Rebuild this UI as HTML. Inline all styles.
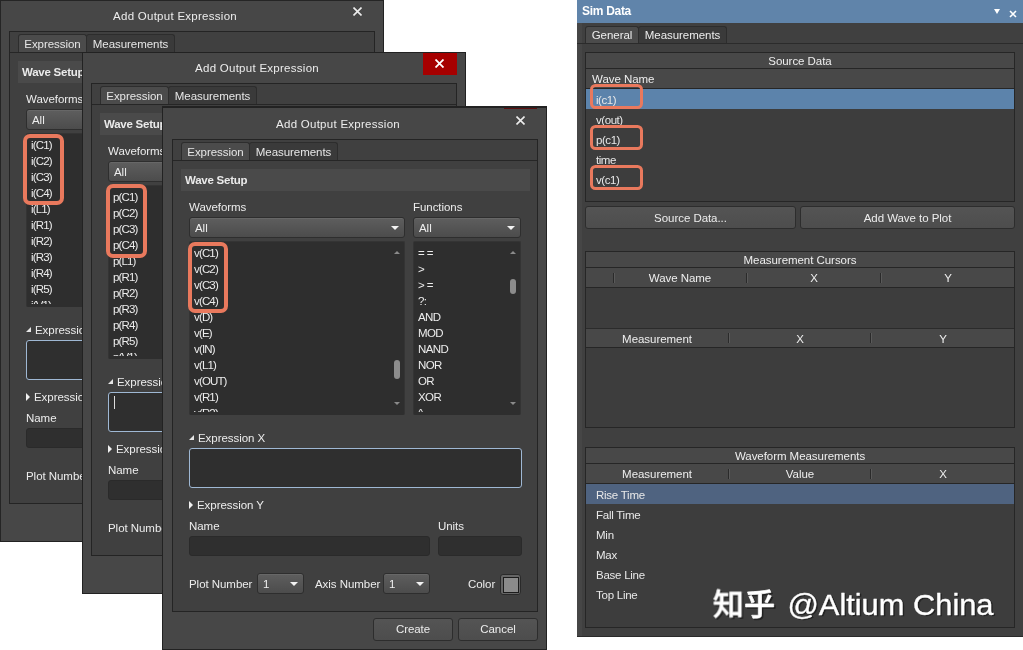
<!DOCTYPE html>
<html><head><meta charset="utf-8"><title>Add Output Expression</title><style>
*{box-sizing:border-box;margin:0;padding:0}
html,body{width:1023px;height:650px;overflow:hidden;background:#fff}
body{position:relative;font-family:"Liberation Sans",sans-serif;font-size:11.5px;color:#ececec;letter-spacing:-0.05px}
.a{position:absolute}
.dlg{will-change:transform;position:absolute;width:385px;height:542px;background:#474747;border:1px solid #222;overflow:hidden}
.dlg .title{position:absolute;left:75px;width:200px;top:7px;height:18px;line-height:18px;text-align:center;font-size:11.5px;color:#ececec;letter-spacing:0.27px}
.dlg .x{position:absolute;left:353px;top:7px;width:9px;height:9px}
.dlg .xr{position:absolute;left:341px;top:0px;width:34px;height:23px;background:#a60000}
.page{position:absolute;left:9px;top:31px;width:366px;height:473px;background:#404040;border:1px solid #242424}
.tabline{position:absolute;left:10px;top:52px;width:364px;height:1px;background:#262626}
.tab{position:absolute;top:34px;height:19px;line-height:19px;text-align:center;border:1px solid #2d2d2d;border-bottom:none;border-radius:3px 3px 0 0;color:#e6e6e6}
.tab.on{background:#4b4b4b;left:18px;width:69px}
.tab.off{background:#3a3a3a;left:86px;width:89px}
.band{position:absolute;left:18px;top:61px;width:349px;height:22px;background:#4a4a4a;line-height:23px;padding-left:4px;font-weight:bold;color:#eaeaea;letter-spacing:-0.25px}
.lbl{position:absolute;height:16px;line-height:16px;white-space:nowrap;color:#ececec}
.combo{position:absolute;height:21px;border:1px solid #2e2e2e;border-radius:3px;background:linear-gradient(#5e5e5e,#4c4c4c);box-shadow:inset 0 1px 0 #676767;line-height:20px;padding-left:5px;color:#eee}
.combo i{position:absolute;right:5px;top:8px;width:0;height:0;border-left:4px solid transparent;border-right:4px solid transparent;border-top:4px solid #f2f2f2}
.list{position:absolute;background:#2e2e2e;border:1px solid #343434;border-radius:2px;overflow:hidden;padding-top:3px;border-bottom:3px solid #2e2e2e}
.list div{height:16px;line-height:16px;padding-left:4px;white-space:nowrap;color:#ececec;letter-spacing:-0.85px}
.list .up{position:absolute;right:4px;top:9px;width:0;height:0;padding:0;border-left:3.5px solid transparent;border-right:3.5px solid transparent;border-bottom:3px solid #8a8a8a}
.list .dn{position:absolute;right:4px;bottom:7px;width:0;height:0;padding:0;border-left:3.5px solid transparent;border-right:3.5px solid transparent;border-top:3px solid #8a8a8a}
.list .th{position:absolute;right:4px;width:6px;padding:0;border-radius:3px;background:#8c8c8c}
.hl{position:absolute;border:4px solid #e9795d;border-radius:7px}
.inp{position:absolute;background:#2f2f2f;border:1px solid #2a2a2a;border-radius:3px}
.inp.f{border-color:#9fb8d4;background:#2f2f2f}
.btn{position:absolute;height:23px;border:1px solid #2d2d2d;border-radius:3px;background:linear-gradient(#545454,#4d4d4d);text-align:center;line-height:21px;color:#ececec}
.tri1{position:absolute;width:0;height:0;border-left:5px solid transparent;border-bottom:5px solid #e6e6e6}
.tri2{position:absolute;width:0;height:0;border-top:4px solid transparent;border-bottom:4px solid transparent;border-left:4.5px solid #f0f0f0}
.sw{position:absolute;width:21px;height:21px;border:1px solid #2a2a2a;border-radius:3px;background:#666;padding:1.5px}
.sw b{display:block;width:100%;height:100%;background:#8b8b8b;border:1px solid #1c1c1c}
/* sim panel */
.sim{will-change:transform;position:absolute;left:577px;top:0;width:446px;height:637px;background:#404040;border-bottom:1px solid #2a2a2a}
.sim .hd{position:absolute;left:0;top:0;width:446px;height:23px;background:#6084aa;color:#fff;font-weight:bold;line-height:22px;padding-left:5px;font-size:12px;letter-spacing:-0.3px}
.stab{position:absolute;top:26px;height:18px;line-height:17px;text-align:center;border:1px solid #2d2d2d;border-bottom:none;border-radius:3px 3px 0 0}
.grid{position:absolute;background:#3d3d3d;border:1px solid #262626}
.gh{position:absolute;left:0;height:16px;line-height:17px;background:#484848;border-bottom:1px solid #262626;text-align:center;color:#eee;white-space:nowrap}
.gh span{position:absolute;top:0;height:19px;text-align:center}
.sep{position:absolute;width:1px;height:10px;top:3px;background:#2a2a2a;box-shadow:1px 0 0 #5a5a5a}
.row{position:absolute;left:0;height:20px;line-height:20px;letter-spacing:-0.25px;padding-left:10px;color:#e8e8e8;white-space:nowrap}
</style></head><body>
<div class="dlg" style="left:-1px;top:-1px;z-index:1;height:543px;width:385px"><div class="a" style="left:0;top:0;width:1px;height:541px;background:#252525"></div><div class="a" style="left:0;top:0;width:383px;height:1px;background:#252525"></div><div class="a" style="left:0px;top:0px;width:383px;height:540px">
<div class="title">Add Output Expression</div><div class="x" style="margin-top:-1px"><svg width="9" height="9" viewBox="0 0 9 9"><path d="M0.5 0.5L8.5 8.5M8.5 0.5L0.5 8.5" stroke="#ececec" stroke-width="1.6" fill="none"/></svg></div>
<div class="page"></div>
<div class="tab off">Measurements</div><div class="tab on">Expression</div><div class="tabline"></div>
<div class="band">Wave Setup</div>
<div class="lbl" style="left:26px;top:91px">Waveforms</div>
<div class="lbl" style="left:250px;top:91px">Functions</div>
<div class="combo" style="left:26px;top:109px;width:216px">All<i></i></div>
<div class="combo" style="left:250px;top:109px;width:108px">All<i></i></div>
<div class="list" style="left:26px;top:133px;width:216px;height:174px"><div>i(C1)</div><div>i(C2)</div><div>i(C3)</div><div>i(C4)</div><div>i(L1)</div><div>i(R1)</div><div>i(R2)</div><div>i(R3)</div><div>i(R4)</div><div>i(R5)</div><div>i(V1)</div><div class="up"></div><div class="th" style="top:118px;height:19px"></div><div class="dn"></div></div>
<div class="list" style="left:250px;top:133px;width:108px;height:174px"><div style="letter-spacing:-0.6px">= =</div><div style="letter-spacing:-0.6px">&gt;</div><div style="letter-spacing:-0.6px">&gt; =</div><div style="letter-spacing:-0.6px">?:</div><div style="letter-spacing:-0.6px">AND</div><div style="letter-spacing:-0.6px">MOD</div><div style="letter-spacing:-0.6px">NAND</div><div style="letter-spacing:-0.6px">NOR</div><div style="letter-spacing:-0.6px">OR</div><div style="letter-spacing:-0.6px">XOR</div><div style="letter-spacing:-0.6px">^</div><div class="up"></div><div class="th" style="top:37px;height:15px"></div><div class="dn"></div></div>
<div class="hl" style="left:23px;top:134px;width:41px;height:71px"></div>
<div class="tri1" style="left:26px;top:327px"></div><div class="lbl" style="left:35px;top:322px">Expression X</div>
<div class="inp f" style="left:26px;top:340px;width:333px;height:40px"></div>
<div class="tri2" style="left:26px;top:393px"></div><div class="lbl" style="left:34px;top:389px">Expression Y</div>
<div class="lbl" style="left:26px;top:410px">Name</div><div class="lbl" style="left:275px;top:410px">Units</div>
<div class="inp" style="left:26px;top:428px;width:241px;height:20px"></div>
<div class="inp" style="left:275px;top:428px;width:83.5px;height:20px"></div>
<div class="lbl" style="left:26px;top:468px">Plot Number</div>
<div class="combo" style="left:94px;top:465px;width:47px">1<i></i></div>
<div class="lbl" style="left:152px;top:468px">Axis Number</div>
<div class="combo" style="left:220px;top:465px;width:47px">1<i></i></div>
<div class="lbl" style="left:305px;top:468px">Color</div>
<div class="sw" style="left:337px;top:466px"><b></b></div>
<div class="btn" style="left:210px;top:510px;width:80px">Create</div>
<div class="btn" style="left:295px;top:510px;width:80px">Cancel</div>
</div></div>
<div class="dlg" style="left:82px;top:52px;z-index:2;height:542px;width:384px"><div class="a" style="left:-1px;top:-1px;width:383px;height:540px">
<div class="title">Add Output Expression</div><div class="xr"></div><div class="x" style="margin-top:-1px"><svg width="9" height="9" viewBox="0 0 9 9"><path d="M0.5 0.5L8.5 8.5M8.5 0.5L0.5 8.5" stroke="#fff" stroke-width="1.8" fill="none"/></svg></div>
<div class="page"></div>
<div class="tab off">Measurements</div><div class="tab on">Expression</div><div class="tabline"></div>
<div class="band">Wave Setup</div>
<div class="lbl" style="left:26px;top:91px">Waveforms</div>
<div class="lbl" style="left:250px;top:91px">Functions</div>
<div class="combo" style="left:26px;top:109px;width:216px">All<i></i></div>
<div class="combo" style="left:250px;top:109px;width:108px">All<i></i></div>
<div class="list" style="left:26px;top:133px;width:216px;height:174px"><div>p(C1)</div><div>p(C2)</div><div>p(C3)</div><div>p(C4)</div><div>p(L1)</div><div>p(R1)</div><div>p(R2)</div><div>p(R3)</div><div>p(R4)</div><div>p(R5)</div><div>p(V1)</div><div class="up"></div><div class="th" style="top:118px;height:19px"></div><div class="dn"></div></div>
<div class="list" style="left:250px;top:133px;width:108px;height:174px"><div style="letter-spacing:-0.6px">= =</div><div style="letter-spacing:-0.6px">&gt;</div><div style="letter-spacing:-0.6px">&gt; =</div><div style="letter-spacing:-0.6px">?:</div><div style="letter-spacing:-0.6px">AND</div><div style="letter-spacing:-0.6px">MOD</div><div style="letter-spacing:-0.6px">NAND</div><div style="letter-spacing:-0.6px">NOR</div><div style="letter-spacing:-0.6px">OR</div><div style="letter-spacing:-0.6px">XOR</div><div style="letter-spacing:-0.6px">^</div><div class="up"></div><div class="th" style="top:37px;height:15px"></div><div class="dn"></div></div>
<div class="hl" style="left:23.5px;top:131.5px;width:41.5px;height:74.5px"></div>
<div class="tri1" style="left:26px;top:327px"></div><div class="lbl" style="left:35px;top:322px">Expression X</div>
<div class="inp f" style="left:26px;top:340px;width:333px;height:40px"></div><div class="a" style="left:32px;top:344px;width:1px;height:13px;background:#ddd"></div>
<div class="tri2" style="left:26px;top:393px"></div><div class="lbl" style="left:34px;top:389px">Expression Y</div>
<div class="lbl" style="left:26px;top:410px">Name</div><div class="lbl" style="left:275px;top:410px">Units</div>
<div class="inp" style="left:26px;top:428px;width:241px;height:20px"></div>
<div class="inp" style="left:275px;top:428px;width:83.5px;height:20px"></div>
<div class="lbl" style="left:26px;top:468px">Plot Number</div>
<div class="combo" style="left:94px;top:465px;width:47px">1<i></i></div>
<div class="lbl" style="left:152px;top:468px">Axis Number</div>
<div class="combo" style="left:220px;top:465px;width:47px">1<i></i></div>
<div class="lbl" style="left:305px;top:468px">Color</div>
<div class="sw" style="left:337px;top:466px"><b></b></div>
<div class="btn" style="left:210px;top:510px;width:80px">Create</div>
<div class="btn" style="left:295px;top:510px;width:80px">Cancel</div>
</div></div>
<div class="a" style="left:162px;top:106px;width:385px;height:2px;background:#222;z-index:3"></div>
<div class="dlg" style="left:162px;top:107px;z-index:3;height:543px;width:385px"><div class="a" style="left:341px;top:0;width:33px;height:1px;background:#5c1010"></div><div class="a" style="left:0px;top:0px;width:383px;height:540px">
<div class="title">Add Output Expression</div><div class="x" style="margin-top:0px"><svg width="9" height="9" viewBox="0 0 9 9"><path d="M0.5 0.5L8.5 8.5M8.5 0.5L0.5 8.5" stroke="#ececec" stroke-width="1.6" fill="none"/></svg></div>
<div class="page"></div>
<div class="tab off">Measurements</div><div class="tab on">Expression</div><div class="tabline"></div>
<div class="band">Wave Setup</div>
<div class="lbl" style="left:26px;top:91px">Waveforms</div>
<div class="lbl" style="left:250px;top:91px">Functions</div>
<div class="combo" style="left:26px;top:109px;width:216px">All<i></i></div>
<div class="combo" style="left:250px;top:109px;width:108px">All<i></i></div>
<div class="list" style="left:26px;top:133px;width:216px;height:174px"><div>v(C1)</div><div>v(C2)</div><div>v(C3)</div><div>v(C4)</div><div>v(D)</div><div>v(E)</div><div>v(IN)</div><div>v(L1)</div><div>v(OUT)</div><div>v(R1)</div><div>v(R2)</div><div class="up"></div><div class="th" style="top:118px;height:19px"></div><div class="dn"></div></div>
<div class="list" style="left:250px;top:133px;width:108px;height:174px"><div style="letter-spacing:-0.6px">= =</div><div style="letter-spacing:-0.6px">&gt;</div><div style="letter-spacing:-0.6px">&gt; =</div><div style="letter-spacing:-0.6px">?:</div><div style="letter-spacing:-0.6px">AND</div><div style="letter-spacing:-0.6px">MOD</div><div style="letter-spacing:-0.6px">NAND</div><div style="letter-spacing:-0.6px">NOR</div><div style="letter-spacing:-0.6px">OR</div><div style="letter-spacing:-0.6px">XOR</div><div style="letter-spacing:-0.6px">^</div><div class="up"></div><div class="th" style="top:37px;height:15px"></div><div class="dn"></div></div>
<div class="hl" style="left:25px;top:134px;width:40px;height:71px"></div>
<div class="tri1" style="left:26px;top:327px"></div><div class="lbl" style="left:35px;top:322px">Expression X</div>
<div class="inp f" style="left:26px;top:340px;width:333px;height:40px"></div>
<div class="tri2" style="left:26px;top:393px"></div><div class="lbl" style="left:34px;top:389px">Expression Y</div>
<div class="lbl" style="left:26px;top:410px">Name</div><div class="lbl" style="left:275px;top:410px">Units</div>
<div class="inp" style="left:26px;top:428px;width:241px;height:20px"></div>
<div class="inp" style="left:275px;top:428px;width:83.5px;height:20px"></div>
<div class="lbl" style="left:26px;top:468px">Plot Number</div>
<div class="combo" style="left:94px;top:465px;width:47px">1<i></i></div>
<div class="lbl" style="left:152px;top:468px">Axis Number</div>
<div class="combo" style="left:220px;top:465px;width:47px">1<i></i></div>
<div class="lbl" style="left:305px;top:468px">Color</div>
<div class="sw" style="left:337px;top:466px"><b></b></div>
<div class="btn" style="left:210px;top:510px;width:80px">Create</div>
<div class="btn" style="left:295px;top:510px;width:80px">Cancel</div>
</div></div>
<div class="sim">
<div class="hd">Sim Data</div>
<div class="a" style="left:0;top:23px;width:5px;height:613px;background:#464646"></div>
<div class="a" style="left:416.5px;top:9px;width:0;height:0;border-left:3.5px solid transparent;border-right:3.5px solid transparent;border-top:5px solid #fff"></div>
<div class="a" style="left:431.5px;top:8px;width:8px;height:8px"><svg width="8" height="8" viewBox="0 0 8 8"><path d="M1 1L7 7M7 1L1 7" stroke="#fff" stroke-width="1.6"/></svg></div>
<div class="stab" style="left:61px;width:89px;background:#3a3a3a">Measurements</div>
<div class="stab" style="left:8px;width:54px;background:#4b4b4b">General</div>
<div class="a" style="left:0;top:43px;width:446px;height:1px;background:#2b2b2b"></div>

<div class="grid" style="left:8px;top:52px;width:430px;height:150px">
 <div class="gh" style="top:0;width:428px">Source Data</div>
 <div class="gh" style="top:16px;width:428px;height:20px;line-height:21px;text-align:left;padding-left:6px">Wave Name</div>
 <div class="row" style="top:36px;width:428px;background:#5c83ab;line-height:22px;letter-spacing:-0.45px">i(c1)</div>
 <div class="row" style="top:56px;width:428px;line-height:22px;letter-spacing:-0.45px">v(out)</div>
 <div class="row" style="top:76px;width:428px;line-height:22px;letter-spacing:-0.45px">p(c1)</div>
 <div class="row" style="top:96px;width:428px;line-height:22px;letter-spacing:-0.45px">time</div>
 <div class="row" style="top:116px;width:428px;line-height:22px;letter-spacing:-0.45px">v(c1)</div>
</div>
<div class="hl" style="left:12.5px;top:84px;width:53.5px;height:24.5px;border-width:3.5px;border-radius:5.5px"></div>
<div class="hl" style="left:12.5px;top:125px;width:53.5px;height:24.5px;border-width:3.5px;border-radius:5.5px"></div>
<div class="hl" style="left:12.5px;top:165px;width:53.5px;height:24.5px;border-width:3.5px;border-radius:5.5px"></div>
<div class="btn" style="left:8px;top:206px;width:211px;height:23px;line-height:22px">Source Data...</div>
<div class="btn" style="left:223px;top:206px;width:215px;height:23px;line-height:22px">Add Wave to Plot</div>

<div class="grid" style="left:8px;top:251px;width:430px;height:177px">
 <div class="gh" style="top:0;width:428px">Measurement Cursors</div>
 <div class="gh" style="top:16px;width:428px;height:20px;line-height:21px"><span style="left:28px;width:132px">Wave Name</span><span style="left:162px;width:132px">X</span><span style="left:296px;width:132px">Y</span><div class="sep" style="left:27px;top:5px"></div><div class="sep" style="left:160px;top:5px"></div><div class="sep" style="left:294px;top:5px"></div></div>
 <div class="gh" style="top:76px;width:428px;height:20px;line-height:21px;border-top:1px solid #2b2b2b"><span style="left:0px;width:142px">Measurement</span><span style="left:143px;width:142px">X</span><span style="left:286px;width:142px">Y</span><div class="sep" style="left:142px;top:4px"></div><div class="sep" style="left:284px;top:4px"></div></div>
</div>

<div class="grid" style="left:8px;top:447px;width:430px;height:181px">
 <div class="gh" style="top:0;width:428px">Waveform Measurements</div>
 <div class="gh" style="top:16px;width:428px;height:20px;line-height:21px"><span style="left:0px;width:142px">Measurement</span><span style="left:143px;width:142px">Value</span><span style="left:286px;width:142px">X</span><div class="sep" style="left:142px;top:5px"></div><div class="sep" style="left:284px;top:5px"></div></div>
 <div class="row" style="top:36px;width:428px;background:#4f6380;line-height:22px">Rise Time</div>
 <div class="row" style="top:57px;width:428px">Fall Time</div>
 <div class="row" style="top:77px;width:428px">Min</div>
 <div class="row" style="top:97px;width:428px">Max</div>
 <div class="row" style="top:117px;width:428px">Base Line</div>
 <div class="row" style="top:137px;width:428px">Top Line</div>
</div>
</div>
<svg class="a" style="left:706px;top:580px;z-index:50" width="310" height="50" viewBox="0 0 310 50">
<defs><g id="wm"><g transform="translate(6.8,35.6) scale(0.0312,-0.0312)" stroke-width="24" stroke-linejoin="round"><path d="M542 758V-55H634V21H817V-43H913V758ZM634 110V669H817V110ZM145 844C123 726 83 608 26 533C48 520 86 494 103 478C131 518 156 569 178 625H239V475V444H41V354H233C218 228 171 91 29 -10C48 -24 83 -62 96 -81C202 -4 263 97 296 200C349 137 417 52 450 2L515 83C486 117 370 247 320 296L329 354H513V444H335V473V625H485V713H208C219 750 229 788 237 826Z"/><path transform="translate(1000,0)" d="M155 616C192 548 232 458 244 401L332 435C317 491 276 580 237 646ZM773 665C750 594 706 496 671 435L749 404C787 462 834 553 874 632ZM51 374V278H459V39C459 18 450 11 428 10C405 10 324 10 245 13C261 -14 279 -57 285 -85C389 -85 458 -83 501 -67C544 -53 561 -25 561 38V278H952V374H561V698C674 710 781 726 867 747L819 834C647 791 357 766 112 757C122 734 133 697 135 671C238 674 350 679 459 688V374Z"/></g>
<text x="81.5" y="34.8" font-family="Liberation Sans, sans-serif" font-size="30" textLength="206" lengthAdjust="spacingAndGlyphs" stroke-width="0.35" stroke-linejoin="round">@Altium China</text></g></defs>
<use href="#wm" x="1.5" y="1.5" fill="#1a1a1a" stroke="#1a1a1a" opacity="0.75"/>
<use href="#wm" fill="#ffffff" stroke="#ffffff"/>
</svg>
</body></html>
